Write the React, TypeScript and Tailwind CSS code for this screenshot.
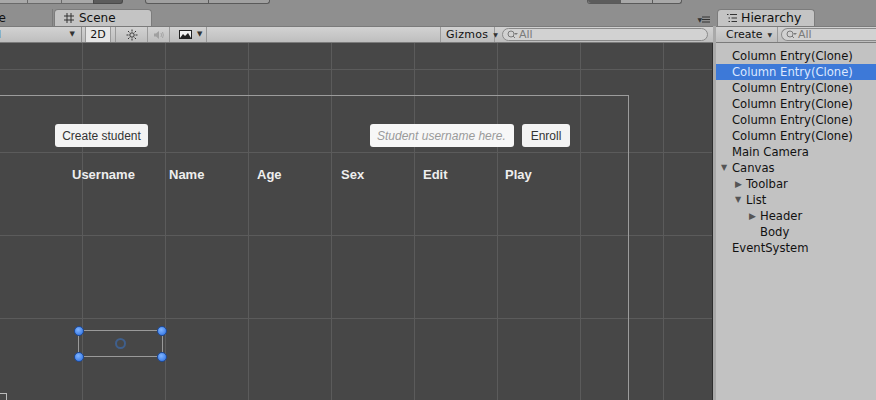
import React from "react";

const items: { label: string; indent: number; arrow?: "down" | "right"; selected?: boolean }[] = [
  { label: "Column Entry(Clone)", indent: 0 },
  { label: "Column Entry(Clone)", indent: 0, selected: true },
  { label: "Column Entry(Clone)", indent: 0 },
  { label: "Column Entry(Clone)", indent: 0 },
  { label: "Column Entry(Clone)", indent: 0 },
  { label: "Column Entry(Clone)", indent: 0 },
  { label: "Main Camera", indent: 0 },
  { label: "Canvas", indent: 0, arrow: "down" },
  { label: "Toolbar", indent: 1, arrow: "right" },
  { label: "List", indent: 1, arrow: "down" },
  { label: "Header", indent: 2, arrow: "right" },
  { label: "Body", indent: 2 },
  { label: "EventSystem", indent: 0 },
];

const headers = [
  { label: "Username", w: "w-[97px]" },
  { label: "Name", w: "w-[88px]" },
  { label: "Age", w: "w-[84px]" },
  { label: "Sex", w: "w-[82px]" },
  { label: "Edit", w: "w-[82px]" },
  { label: "Play", w: "w-[60px]" },
];

function SearchField({ className }: { className: string }) {
  return (
    <div className={"flex h-[13px] items-center rounded-full border border-[#8a8a8a] bg-[#d2d2d2] pl-[4px] text-[11px] leading-none text-[#7a7a7a] " + className}>
      <svg width="11" height="9" viewBox="0 0 11 9" className="mr-[1px]">
        <circle cx="4" cy="4" r="3" fill="none" stroke="#7a7a7a" strokeWidth="1" />
        <path d="M6 6 L8 8" stroke="#7a7a7a" strokeWidth="1" />
        <path d="M7 3 L11 3 L9 5 Z" fill="#7a7a7a" />
      </svg>
      All
    </div>
  );
}

function Caret() {
  return <span className="text-[7px] leading-none text-[#333]">▼</span>;
}

function Handle() {
  return <div className="h-[10px] w-[10px] rounded-full border border-[#1c4a9a] bg-[radial-gradient(circle_at_40%_35%,#7fb4ff,#2a6de0)]" />;
}

export default function App() {
  return (
    <div className="flex h-[400px] w-[876px] flex-col overflow-hidden bg-[#8f8f8f] font-['DejaVu_Sans',sans-serif] text-[#111]">
      {/* partial top toolbar */}
      <div className="flex h-[9px] shrink-0 items-start">
        <div className="h-[4px] w-[28px] border-b border-r border-[#6a6a6a] bg-[#a8a8a8]" />
        <div className="h-[4px] w-[34px] border-b border-r border-[#6a6a6a] bg-[#a8a8a8]" />
        <div className="h-[4px] w-[31px] border-b border-[#6a6a6a] bg-[#a8a8a8]" />
        <div className="h-[4px] w-[30px] rounded-br-[3px] border-x border-b border-[#4a4a4a] bg-[#5c5c5c]" />
        <div className="ml-[22px] flex h-[4px] w-[125px] rounded-b-[3px] border-x border-b border-[#5a5a5a] bg-[#a0a0a0]">
          <div className="w-[63px] border-r border-[#5a5a5a]" />
        </div>
        <div className="ml-[317px] flex h-[4px] w-[95px] rounded-b-[3px] border-x border-b border-[#5a5a5a] bg-[#a8a8a8]">
          <div className="w-[33px] rounded-bl-[3px] bg-[#5c5c5c]" />
          <div className="w-[32px] border-r border-[#5a5a5a]" />
        </div>
      </div>

      <div className="flex min-h-0 flex-1">
        {/* scene pane */}
        <div className="flex min-h-0 w-[713px] flex-col">
          <div className="flex h-[17px] shrink-0 items-end">
            <div className="flex h-[17px] w-[53px] items-center border-r border-[#7a7a7a] text-[12px] leading-none">
              <span className="-ml-[9px] mt-[1px]">ne</span>
            </div>
            <div className="ml-[1px] flex h-[17px] w-[98px] items-center rounded-t-[4px] border border-b-0 border-[#7c7c7c] bg-[#c4c4c4] pl-[9px] text-[12px] leading-none">
              <svg width="10" height="10" viewBox="0 0 10 10" className="mr-[5px]">
                <path d="M3 0V10M7 0V10M0 3H10M0 7H10" stroke="#333" strokeWidth="1" />
              </svg>
              Scene
            </div>
            <div className="flex-1" />
            <div className="mb-[3px] mr-[3px] flex items-center text-[#333]">
              <span className="text-[6px] leading-none">▼</span>
              <svg width="8" height="7" viewBox="0 0 8 7">
                <path d="M0 1 H8 M0 3.5 H8 M0 6 H8" stroke="#333" strokeWidth="1" />
              </svg>
            </div>
          </div>

          {/* scene toolbar */}
          <div className="flex h-[17px] shrink-0 items-center border-y border-[#7b7b7b] bg-[linear-gradient(#d2d2d2,#bebebe)] text-[11px] leading-none">
            <div className="flex h-full w-[82px] items-center justify-between border-r border-[#8e8e8e] pr-[6px]">
              <span className="-ml-[2px]">l</span>
              <Caret />
            </div>
            <div className="ml-[3px] flex h-full w-[26px] items-center justify-center border-x border-[#9a9a9a] bg-[#e6e6e6]">2D</div>
            <div className="ml-[4px] flex h-full w-[33px] items-center justify-center border-x border-[#9a9a9a]">
              <svg width="12" height="12" viewBox="0 0 12 12">
                <circle cx="6" cy="6" r="2.2" fill="none" stroke="#333" strokeWidth="1" />
                <path d="M6 0.5V2.5M6 9.5V11.5M0.5 6H2.5M9.5 6H11.5M2 2L3.4 3.4M8.6 8.6L10 10M2 10L3.4 8.6M8.6 3.4L10 2" stroke="#333" strokeWidth="1" />
              </svg>
            </div>
            <div className="flex h-full w-[22px] items-center justify-center border-r border-[#9a9a9a]">
              <svg width="12" height="10" viewBox="0 0 12 10">
                <path d="M1 3.5H3L6 1V9L3 6.5H1Z" fill="#a0a0a0" />
                <path d="M8 3Q9 5 8 7M9.5 2Q11.2 5 9.5 8" fill="none" stroke="#a0a0a0" strokeWidth="0.9" />
              </svg>
            </div>
            <div className="flex h-full w-[37px] items-center border-r border-[#9a9a9a] pl-[9px]">
              <svg width="13" height="9" viewBox="0 0 13 9">
                <rect x="0.5" y="0.5" width="12" height="8" fill="#f2f2f2" stroke="#222" />
                <path d="M1 8L4 4L6 6L9 3L12 8Z" fill="#222" />
              </svg>
              <span className="ml-[5px] text-[7px] text-[#333]">▼</span>
            </div>
            <div className="flex-1" />
            <div className="flex h-full w-[55px] shrink-0 items-center border-x border-[#9a9a9a] pl-[5px] text-[11px] tracking-[0.3px]">
              Gizmos
              <span className="ml-[5px] text-[6px] text-[#333]">▼</span>
            </div>
            <SearchField className="ml-[7px] mr-[5px] w-[206px] shrink-0" />
          </div>

          {/* scene view */}
          <div className="relative min-h-0 flex-1 overflow-hidden border-r border-[#2e2e2e] bg-[#474747] [background-image:linear-gradient(to_right,#5b5b5b_1px,transparent_1px),linear-gradient(to_bottom,#5b5b5b_1px,transparent_1px)] [background-position:82px_26px] [background-size:83px_83px]">
            <div className="-ml-[1px] mt-[52px] h-[320px] w-[630px] border-r border-t border-[#9c9c9c] font-['Liberation_Sans',Arial,sans-serif]">
              <div className="mt-[28px] flex h-[23px] items-center">
                <div className="ml-[56px] flex h-[23px] w-[93px] items-center justify-center rounded-[3px] bg-[#f3f3f3] text-[12px] text-[#333]">
                  Create student
                </div>
                <div className="ml-[222px] flex h-[23px] w-[144px] items-center rounded-[3px] bg-[#f7f7f7] pl-[7px] text-[12px] italic text-[#9a9a9a]">
                  Student username here.
                </div>
                <div className="ml-[8px] flex h-[23px] w-[48px] items-center justify-center rounded-[3px] bg-[#f3f3f3] text-[12px] text-[#333]">
                  Enroll
                </div>
              </div>
              <div className="ml-[73px] mt-[18px] flex text-[13px] font-bold text-[#eeeeee]">
                {headers.map((h) => (
                  <div key={h.label} className={h.w}>
                    {h.label}
                  </div>
                ))}
              </div>
              {/* selected rect */}
              <div className="ml-[75px] mt-[141px] flex w-[93px] flex-col">
                <div className="flex items-center">
                  <Handle />
                  <div className="h-[1px] flex-1 bg-[#9a9a9a]" />
                  <Handle />
                </div>
                <div className="mx-[4px] flex h-[16px] items-center justify-center border-x border-[#9a9a9a]">
                  <div className="h-[11px] w-[11px] rounded-full border-[2px] border-[#3f5f8c]" />
                </div>
                <div className="flex items-center">
                  <Handle />
                  <div className="h-[1px] flex-1 bg-[#9a9a9a]" />
                  <Handle />
                </div>
              </div>
            </div>
            <div className="absolute bottom-0 left-0 h-[7px] w-[7px] border border-b-0 border-l-0 border-[#bbbbbb]" />
          </div>
        </div>

        {/* splitter */}
        <div className="mt-[17px] w-[3px] bg-[#a9a9a9]" />

        {/* hierarchy pane */}
        <div className="flex min-h-0 flex-1 flex-col">
          <div className="flex h-[17px] shrink-0 items-end pl-[1px]">
            <div className="flex h-[17px] w-[98px] items-center rounded-t-[4px] border border-b-0 border-[#7c7c7c] bg-[#c4c4c4] pl-[9px] text-[12.5px] leading-none">
              <svg width="10" height="8" viewBox="0 0 10 8" className="mr-[4px]">
                <path d="M0 0.5H1.5M3 0.5H10M1.5 4H3M4.5 4H10M1.5 7.5H3M4.5 7.5H10" stroke="#333" strokeWidth="1" />
              </svg>
              Hierarchy
            </div>
          </div>
          <div className="flex h-[17px] shrink-0 items-center border-y border-[#7b7b7b] bg-[linear-gradient(#d2d2d2,#bebebe)] text-[11px] leading-none">
            <div className="flex h-full w-[62px] items-center border-r border-[#9a9a9a] pl-[10px]">
              Create
              <span className="ml-[5px] text-[6px] text-[#333]">▼</span>
            </div>
            <SearchField className="ml-[3px] flex-1 rounded-r-none border-r-0" />
          </div>
          <div className="min-h-0 flex-1 bg-[#c2c2c2] pt-[5px] text-[11.6px] leading-[16px]">
            {items.map((it, i) => (
              <div
                key={i}
                className={"flex h-[16px] items-center " + (it.selected ? "bg-[#3d79d8] text-[#dce8ff]" : "text-[#111]")}
                style={{ paddingLeft: 16 + it.indent * 14 - (it.arrow ? 11 : 0) }}
              >
                {it.arrow === "down" && <span className="mr-[3px] w-[8px] text-[8px] text-[#555]">▼</span>}
                {it.arrow === "right" && <span className="mr-[2px] w-[9px] text-[9px] text-[#555]">▶</span>}
                {it.label}
              </div>
            ))}
          </div>
        </div>
      </div>
    </div>
  );
}
